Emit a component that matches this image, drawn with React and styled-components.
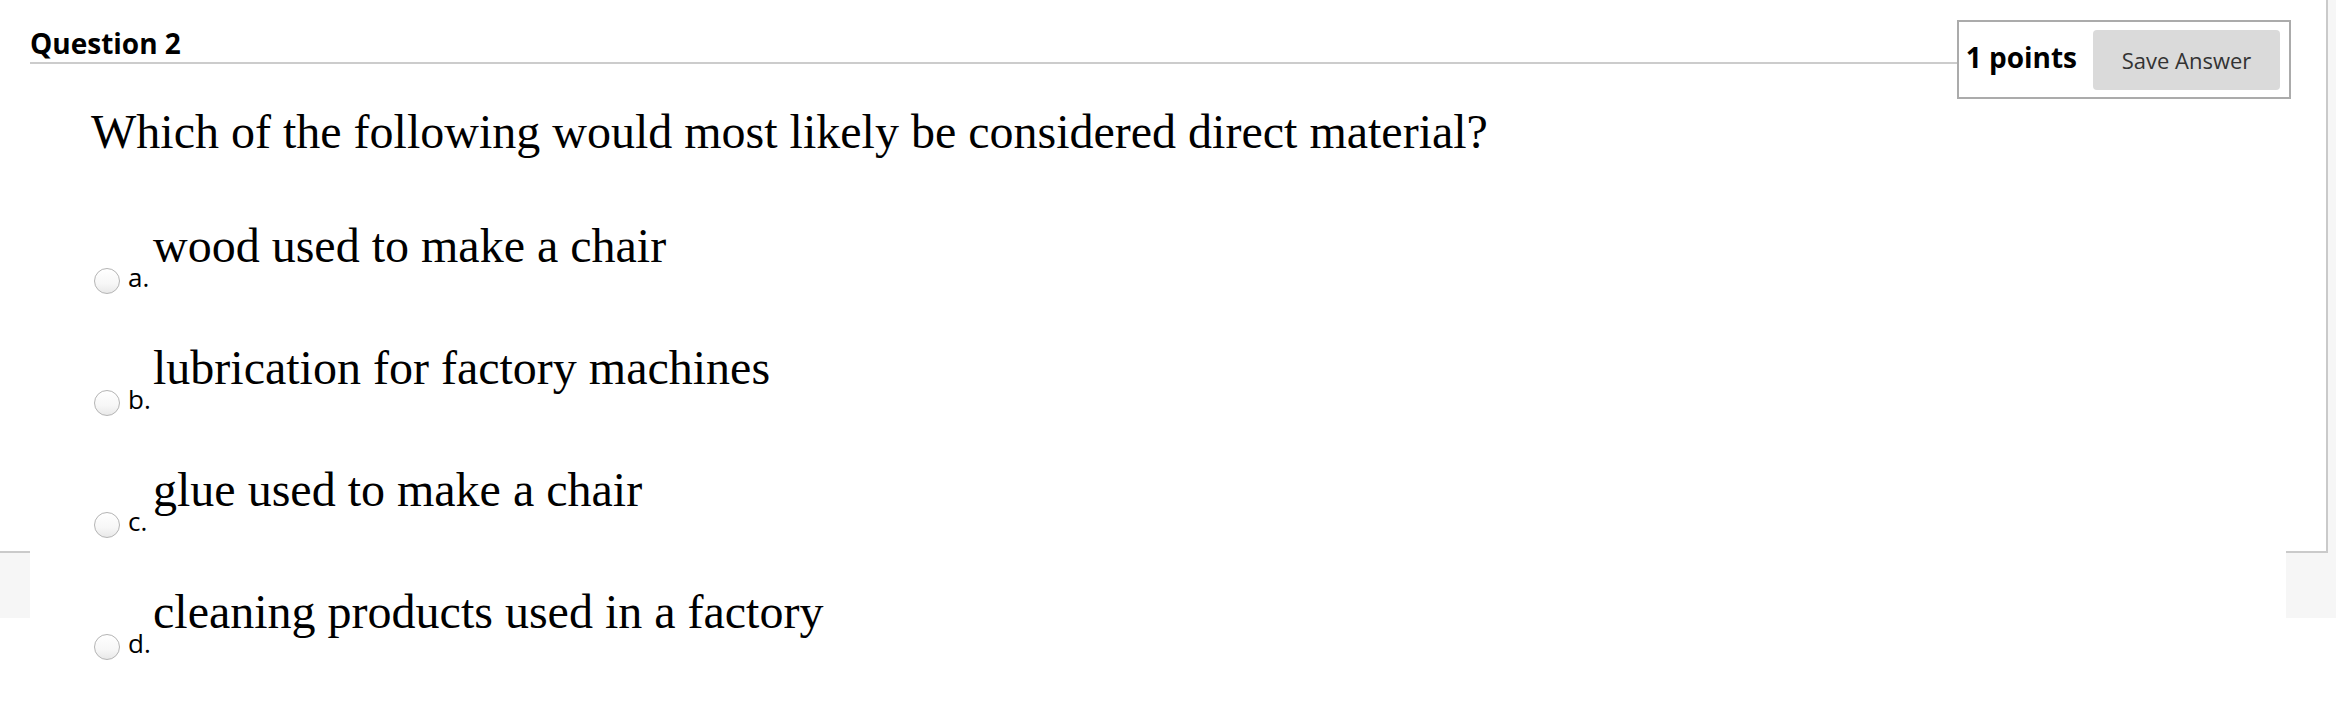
import styled, { createGlobalStyle } from "styled-components";

const GlobalStyle = createGlobalStyle`
  html,
  body {
    margin: 0;
    padding: 0;
    background: #fff;
  }

  body {
    width: 2336px;
    height: 728px;
    overflow: hidden;
    font-family: "Open Sans", "Liberation Sans", sans-serif;
  }
`;

const Page = styled.div`
  position: relative;
  width: 2336px;
  height: 728px;
  background: #fff;
`;

const Backdrop = styled.div`
  display: flex;
  flex-direction: column;
`;

const Upper = styled.div`
  display: flex;
  height: 553px;
`;

const Sheet = styled.div`
  flex: 1;
  background: #fff;
  border-right: 2px solid #cacaca;
  border-bottom: 2px solid #cacaca;
`;

const Gutter = styled.div`
  width: 8px;
  background: #f6f6f6;
`;

const Footer = styled.div`
  height: 65px;
  background: #f6f6f6;
`;

const QuestionPanel = styled.section`
  position: absolute;
  top: 0;
  bottom: 0;
  left: 30px;
  width: 2256px;
  background: #fff;
`;

const Header = styled.header`
  display: flex;
  align-items: flex-start;
  margin-right: -5px;
`;

const Title = styled.h2`
  flex: 1;
  margin: 0;
  padding-top: 24px;
  font: 700 28px/38px "Open Sans", sans-serif;
  color: #000;
  border-bottom: 2px solid #cccccc;
`;

const PointsBox = styled.div`
  display: flex;
  align-items: center;
  gap: 16px;
  box-sizing: border-box;
  height: 79px;
  margin-top: 20px;
  padding: 0 9px 0 7px;
  border: 2px solid #ababab;
  background: #fff;
`;

const Points = styled.span`
  margin-bottom: 5px;
  font: 700 28px/38px "Open Sans", sans-serif;
  color: #000;
`;

const SaveButton = styled.button`
  width: 187px;
  height: 60px;
  padding: 0;
  border: none;
  border-radius: 4px;
  background: #dadada;
  font: 400 22px/30px "Open Sans", sans-serif;
  color: #333;
`;

const Body = styled.div`
  padding-left: 61px;
`;

const Prompt = styled.p`
  margin: 9px 0 0;
  font: 400 48px/48px "Liberation Serif", "Times New Roman", serif;
  color: #000;
`;

const Options = styled.ul`
  display: flex;
  flex-direction: column;
  gap: 50px;
  margin: 66px 0 0;
  padding: 0;
  list-style: none;
`;

const OptionRow = styled.li`
  display: grid;
  grid-template-columns: 26px 33px auto;
  align-items: end;
  margin-left: 3px;
`;

const Radio = styled.input.attrs({ type: "radio" })`
  appearance: none;
  box-sizing: border-box;
  width: 26px;
  height: 26px;
  margin: 0;
  border: 1px solid #b4b4b4;
  border-radius: 50%;
  background: linear-gradient(#ffffff, #f7f7f7 60%, #e9e9e9);
  box-shadow: inset 0 1px 1px rgba(255, 255, 255, 0.9);
`;

const Letter = styled.span`
  margin: 0 0 4px 8px;
  font: 400 26px/26px "Open Sans", sans-serif;
  color: #000;
`;

const AnswerText = styled.span`
  margin-bottom: 24px;
  font: 400 48px/48px "Liberation Serif", "Times New Roman", serif;
  color: #000;
`;

const answers = [
  { letter: "a.", text: "wood used to make a chair" },
  { letter: "b.", text: "lubrication for factory machines" },
  { letter: "c.", text: "glue used to make a chair" },
  { letter: "d.", text: "cleaning products used in a factory" },
];

const App = () => {
  return (
    <Page>
      <GlobalStyle />
      <Backdrop>
        <Upper>
          <Sheet />
          <Gutter />
        </Upper>
        <Footer />
      </Backdrop>
      <QuestionPanel>
        <Header>
          <Title>Question 2</Title>
          <PointsBox>
            <Points>1 points</Points>
            <SaveButton type="button">Save Answer</SaveButton>
          </PointsBox>
        </Header>
        <Body>
          <Prompt>
            Which of the following would most likely be considered direct
            material?
          </Prompt>
          <Options>
            {answers.map((answer) => (
              <OptionRow key={answer.letter}>
                <Radio name="q2" aria-label={answer.text} />
                <Letter>{answer.letter}</Letter>
                <AnswerText>{answer.text}</AnswerText>
              </OptionRow>
            ))}
          </Options>
        </Body>
      </QuestionPanel>
    </Page>
  );
};

export default App;
